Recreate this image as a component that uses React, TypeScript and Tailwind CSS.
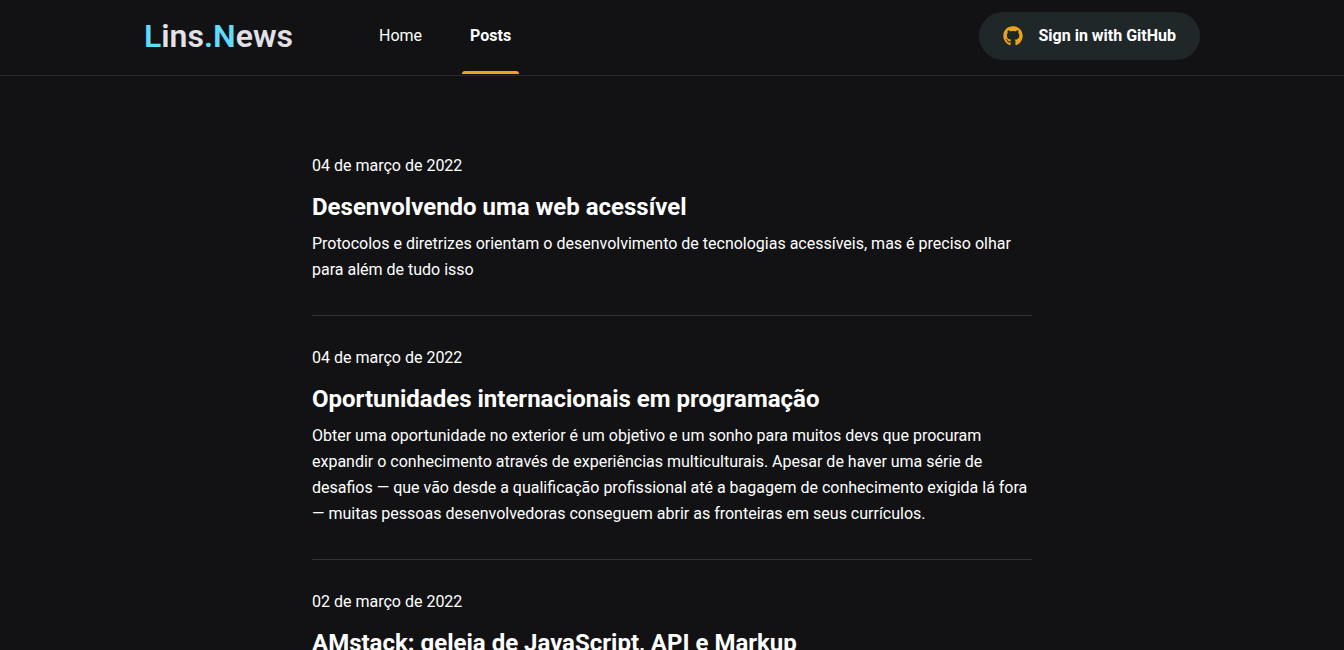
import { FaGithub } from "react-icons/fa";

type Post = { date: string; dateTime: string; title: string; summary?: string };

const posts: Post[] = [
  {
    date: "04 de março de 2022",
    dateTime: "2022-03-04",
    title: "Desenvolvendo uma web acessível",
    summary:
      "Protocolos e diretrizes orientam o desenvolvimento de tecnologias acessíveis, mas é preciso olhar para além de tudo isso",
  },
  {
    date: "04 de março de 2022",
    dateTime: "2022-03-04",
    title: "Oportunidades internacionais em programação",
    summary:
      "Obter uma oportunidade no exterior é um objetivo e um sonho para muitos devs que procuram expandir o conhecimento através de experiências multiculturais. Apesar de haver uma série de desafios — que vão desde a qualificação profissional até a bagagem de conhecimento exigida lá fora — muitas pessoas desenvolvedoras conseguem abrir as fronteiras em seus currículos.",
  },
  {
    date: "02 de março de 2022",
    dateTime: "2022-03-02",
    title: "AMstack: geleia de JavaScript, API e Markup",
  },
];

function Header() {
  return (
    <header className="border-b border-[#29292e] pb-[3px]">
      <div className="mx-auto flex h-18 max-w-[1120px] items-center px-8">
        <a href="#" className="text-[32px] leading-10 font-semibold text-[#e1e1e6]">
          <span className="text-[#61dafb]">L</span>ins
          <span className="text-[#61dafb]">.N</span>ews
        </a>
        <nav className="ml-[78px] flex h-full gap-8 leading-[72px]">
          <a href="#" className="px-2">
            Home
          </a>
          <a
            href="#"
            aria-current="page"
            className="relative px-2 font-bold after:absolute after:-bottom-0.5 after:left-0 after:h-[3px] after:w-full after:rounded-t-[3px] after:bg-[#eba417]"
          >
            Posts
          </a>
        </nav>
        <button
          type="button"
          className="ml-auto flex h-12 items-center gap-4 rounded-full bg-[#1f2729] px-6 font-bold"
        >
          <FaGithub className="size-5 text-[#eba417]" aria-hidden="true" />
          Sign in with GitHub
        </button>
      </div>
    </header>
  );
}

function PostItem({ post }: { post: Post }) {
  return (
    <a href="#" className="block border-t border-[#323238] py-8 first:border-t-0 first:pt-0">
      <time dateTime={post.dateTime} className="block leading-[19px]">
        {post.date}
      </time>
      <h2 className="mt-4 text-2xl leading-8 font-bold">{post.title}</h2>
      {post.summary && <p className="mt-2 leading-[26px]">{post.summary}</p>}
    </a>
  );
}

export default function App() {
  return (
    <div className="min-h-screen bg-[#121214] font-['Roboto',sans-serif] text-base text-white">
      <Header />
      <main className="mx-auto max-w-[1120px] px-8 pt-20">
        <div className="mx-auto max-w-[720px]">
          {posts.map((post) => (
            <PostItem key={post.title} post={post} />
          ))}
        </div>
      </main>
    </div>
  );
}
